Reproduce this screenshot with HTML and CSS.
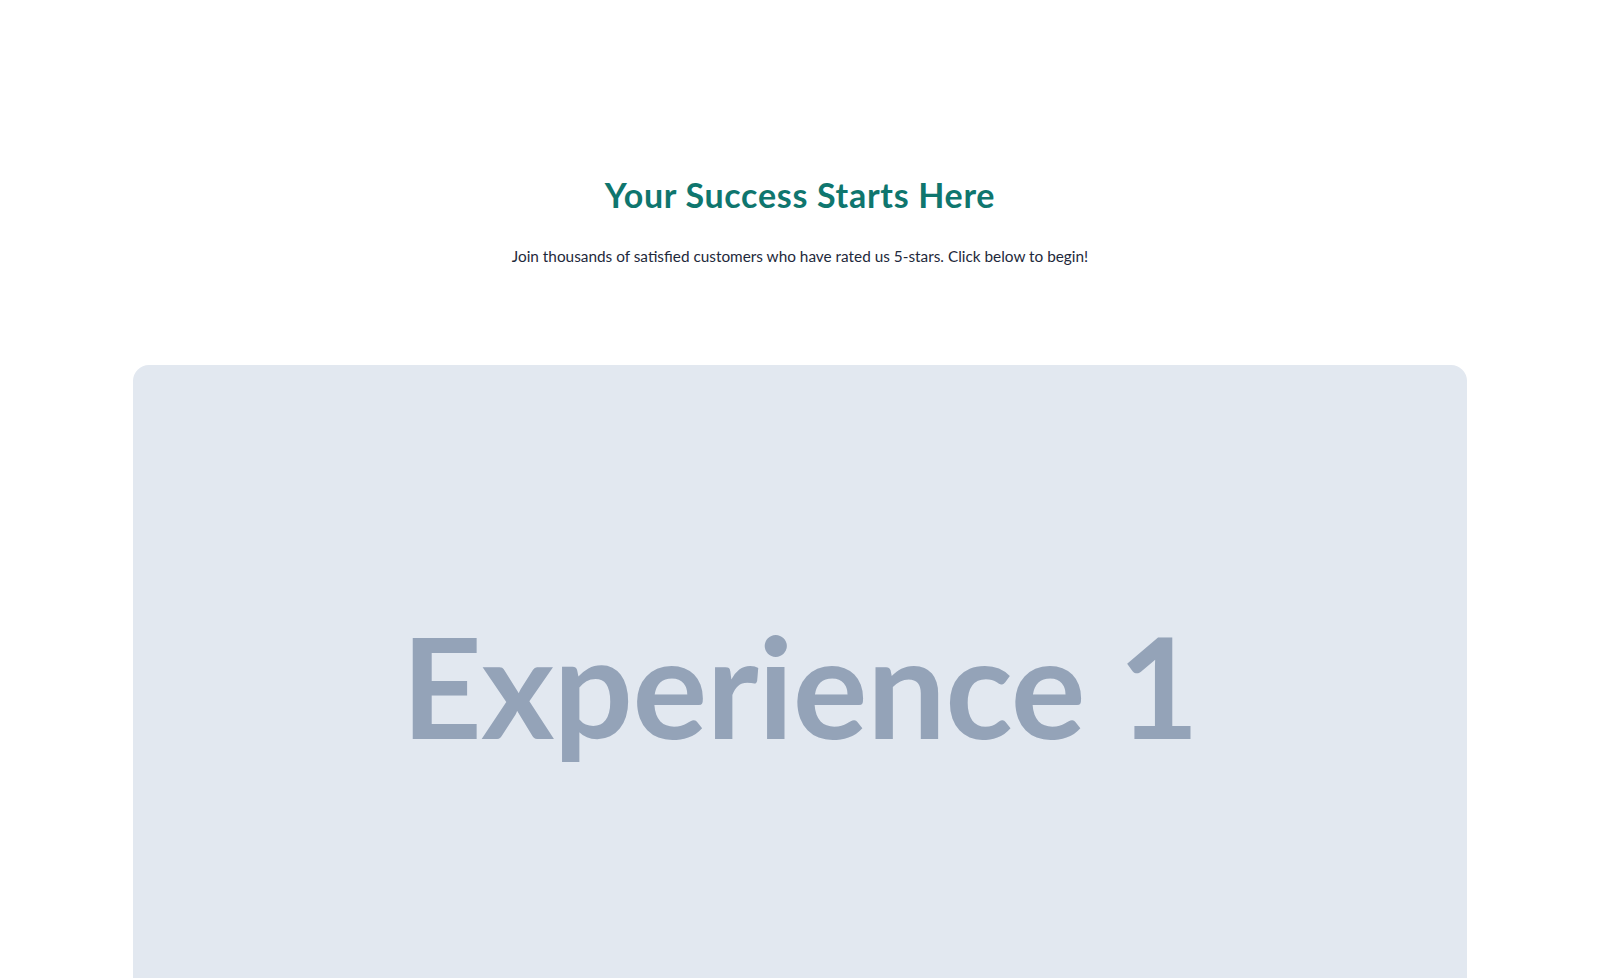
FILE: index.html
```html
<!DOCTYPE html>
<html lang="en">
<head>
<meta charset="utf-8">
<title>Your Success Starts Here</title>
<link rel="stylesheet" href="styles.css">
</head>
<body>
<main class="page">
  <section class="hero">
    <h1 class="hero-title">Your Success Starts Here</h1>
    <p class="hero-text">Join thousands of satisfied customers who have rated us 5-stars. Click below to begin!</p>
  </section>
  <section class="card">
    <span class="card-label">Experience 1</span>
  </section>
</main>
</body>
</html>
```
FILE: styles.css
```css
html, body {
  margin: 0;
  padding: 0;
  background: #ffffff;
}
body {
  font-family: "Lato", "Inter", sans-serif;
  overflow: hidden;
  height: 978px;
}
.page {
  width: 1600px;
  box-sizing: border-box;
  padding: 0 133px;
}
.hero {
  padding-top: 173px;
  text-align: center;
}
.hero-title {
  margin: 0;
  font-family: "Lato", sans-serif;
  font-weight: 700;
  font-size: 34px;
  line-height: 44px;
  letter-spacing: 0.7px;
  color: #0f766e;
}
.hero-text {
  margin: 27px 0 0;
  font-family: "Lato", sans-serif;
  font-size: 15.35px;
  line-height: 24px;
  color: #1e293b;
}
.card {
  margin-top: 97px;
  height: 640px;
  background: #e2e8f0;
  border-radius: 16px;
  display: flex;
  align-items: center;
  justify-content: center;
}
.card-label {
  font-family: "Lato", sans-serif;
  font-weight: 700;
  font-size: 140px;
  line-height: 1;
  letter-spacing: -0.7px;
  color: #94a3b8;
}
```
